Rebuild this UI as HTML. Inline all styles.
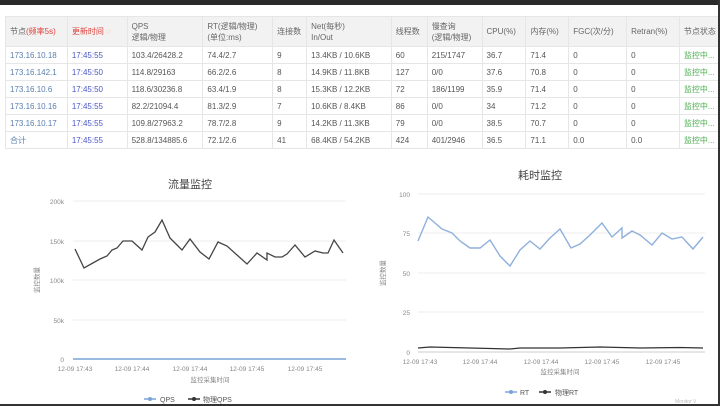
<!DOCTYPE html>
<html><head><meta charset="utf-8"><style>
*{margin:0;padding:0;box-sizing:border-box}
body{width:720px;height:406px;overflow:hidden;background:#fff;font-family:"Liberation Sans","Noto Sans CJK SC",sans-serif;position:relative}
.top{position:absolute;left:0;top:0;width:720px;height:5px;background:#2a2a2a}
.rb{position:absolute;right:0;top:0;width:2px;height:406px;background:#333}
.bb{position:absolute;left:0;bottom:0;width:720px;height:2px;background:#333}
table{position:absolute;left:5px;top:16px;border-collapse:collapse;font-size:8px;color:#555;table-layout:fixed}
td,th{border:1px solid #e6e6e6;padding:0 0 0 4px;text-align:left;font-weight:normal;white-space:nowrap;overflow:hidden}
th{background:#f2f2f2;height:30px;line-height:11px;color:#666}
td{height:17px}
.ip{color:#5a7fb0}.tm{color:#4a57c8}.red{color:#e0403a}.g{color:#4caf50}
svg{position:absolute;left:0;top:0}
</style></head><body>
<div class="top"></div>
<table>
<colgroup><col style="width:62px"><col style="width:60px"><col style="width:76px"><col style="width:70px"><col style="width:34px"><col style="width:85px"><col style="width:36px"><col style="width:55px"><col style="width:44px"><col style="width:43px"><col style="width:58px"><col style="width:53px"><col style="width:40px"></colgroup>
<tr><th>节点<span class="red">(频率5s)</span></th><th><span class="red">更新时间</span> <span style="color:#f0a040">◌</span></th><th>QPS<br>逻辑/物理</th><th>RT(逻辑/物理)<br>(单位:ms)</th><th>连接数</th><th>Net(每秒)<br>In/Out</th><th>线程数</th><th>慢查询<br>(逻辑/物理)</th><th>CPU(%)</th><th>内存(%)</th><th>FGC(次/分)</th><th>Retran(%)</th><th>节点状态</th></tr>
<tr><td class="ip">173.16.10.18</td><td class="tm">17:45:55</td><td>103.4/26428.2</td><td>74.4/2.7</td><td>9</td><td>13.4KB / 10.6KB</td><td>60</td><td>215/1747</td><td>36.7</td><td>71.4</td><td>0</td><td>0</td><td class="g">监控中...</td></tr>
<tr><td class="ip">173.16.142.1</td><td class="tm">17:45:50</td><td>114.8/29163</td><td>66.2/2.6</td><td>8</td><td>14.9KB / 11.8KB</td><td>127</td><td>0/0</td><td>37.6</td><td>70.8</td><td>0</td><td>0</td><td class="g">监控中...</td></tr>
<tr><td class="ip">173.16.10.6</td><td class="tm">17:45:50</td><td>118.6/30236.8</td><td>63.4/1.9</td><td>8</td><td>15.3KB / 12.2KB</td><td>72</td><td>186/1199</td><td>35.9</td><td>71.4</td><td>0</td><td>0</td><td class="g">监控中...</td></tr>
<tr><td class="ip">173.16.10.16</td><td class="tm">17:45:55</td><td>82.2/21094.4</td><td>81.3/2.9</td><td>7</td><td>10.6KB / 8.4KB</td><td>86</td><td>0/0</td><td>34</td><td>71.2</td><td>0</td><td>0</td><td class="g">监控中...</td></tr>
<tr><td class="ip">173.16.10.17</td><td class="tm">17:45:55</td><td>109.8/27963.2</td><td>78.7/2.8</td><td>9</td><td>14.2KB / 11.3KB</td><td>79</td><td>0/0</td><td>38.5</td><td>70.7</td><td>0</td><td>0</td><td class="g">监控中...</td></tr>
<tr><td class="ip">合计</td><td class="tm">17:45:55</td><td>528.8/134885.6</td><td>72.1/2.6</td><td>41</td><td>68.4KB / 54.2KB</td><td>424</td><td>401/2946</td><td>36.5</td><td>71.1</td><td>0.0</td><td>0.0</td><td class="g">监控中...</td></tr>
</table>
<svg width="720" height="406" font-family="Liberation Sans,Noto Sans CJK SC,sans-serif">
<g stroke="#eee" stroke-width="1">
<line x1="73" y1="201" x2="346" y2="201"/><line x1="73" y1="241" x2="346" y2="241"/><line x1="73" y1="280" x2="346" y2="280"/><line x1="73" y1="320" x2="346" y2="320"/>
<line x1="418" y1="194" x2="705" y2="194"/><line x1="418" y1="233" x2="705" y2="233"/><line x1="418" y1="273" x2="705" y2="273"/><line x1="418" y1="312" x2="705" y2="312"/>
</g>
<text x="190" y="188" font-size="11" fill="#444" text-anchor="middle">流量监控</text>
<text x="540" y="179" font-size="11" fill="#444" text-anchor="middle">耗时监控</text>
<g font-size="6.5" fill="#888" text-anchor="end">
<text x="64" y="204">200k</text><text x="64" y="244">150k</text><text x="64" y="283">100k</text><text x="64" y="323">50k</text><text x="64" y="362">0</text>
<text x="410" y="197">100</text><text x="410" y="236">75</text><text x="410" y="276">50</text><text x="410" y="315">25</text><text x="410" y="355">0</text>
</g>
<g font-size="6.5" fill="#888" text-anchor="middle">
<text x="75" y="371">12-09 17:43</text><text x="132" y="371">12-09 17:44</text><text x="190" y="371">12-09 17:44</text><text x="247" y="371">12-09 17:45</text><text x="305" y="371">12-09 17:45</text>
<text x="420" y="364">12-09 17:43</text><text x="480" y="364">12-09 17:44</text><text x="541" y="364">12-09 17:44</text><text x="602" y="364">12-09 17:45</text><text x="663" y="364">12-09 17:45</text>
<text x="210" y="382">监控采集时间</text><text x="560" y="374">监控采集时间</text>
</g>
<text transform="translate(39,280) rotate(-90)" font-size="6.5" fill="#888" text-anchor="middle">监控数量</text>
<text transform="translate(385,273) rotate(-90)" font-size="6.5" fill="#888" text-anchor="middle">监控数量</text>
<line x1="73" y1="359" x2="346" y2="359" stroke="#7aa3d8" stroke-width="1.5"/>
<line x1="418" y1="352" x2="705" y2="352" stroke="#ccc"/>
<polyline fill="none" stroke="#444" stroke-width="1.3" points="75,249 84,268 100,259 107,256 112,250 117,248 123,241 132,241 142,250 148,237 155,232 162,220 170,238 173,241 182,250 190,239 200,252 209,259 218,242 227,246 247,264 257,253 267,260 267,253 275,257 282,257 287,254 295,245 305,257 315,251 323,253 328,253 334,240 343,253"/>
<polyline fill="none" stroke="#8fb0dc" stroke-width="1.4" points="418,241 428,217 442,229 447,231 452,233 460,241 470,248 480,248 490,240 500,256 510,266 520,250 530,241 540,249 550,238 560,229 571,248 580,244 590,235 602,223 612,237 622,228 622,238 632,231 640,235 652,245 662,233 672,239 682,237 693,249 703,237"/>
<polyline fill="none" stroke="#333" stroke-width="1.3" points="418,348 430,347 450,347.5 470,348 490,348.5 510,349 520,348 560,348 600,347 640,348 680,347.5 703,348"/>
<g font-size="7" fill="#555">
<line x1="144" y1="399" x2="156" y2="399" stroke="#7aa3d8" stroke-width="1.5"/><circle cx="150" cy="399" r="2" fill="#7aa3d8"/><text x="160" y="402">QPS</text>
<line x1="188" y1="399" x2="200" y2="399" stroke="#333" stroke-width="1.5"/><circle cx="194" cy="399" r="2" fill="#333"/><text x="203" y="402">物理QPS</text>
<line x1="505" y1="392" x2="517" y2="392" stroke="#7aa3d8" stroke-width="1.5"/><circle cx="511" cy="392" r="2" fill="#7aa3d8"/><text x="520" y="395">RT</text>
<line x1="539" y1="392" x2="551" y2="392" stroke="#333" stroke-width="1.5"/><circle cx="545" cy="392" r="2" fill="#333"/><text x="555" y="395">物理RT</text>
</g>
<text x="675" y="403" font-size="5" fill="#bbb">Monitor V</text>
</svg>
<div class="rb"></div><div class="bb"></div>
</body></html>
